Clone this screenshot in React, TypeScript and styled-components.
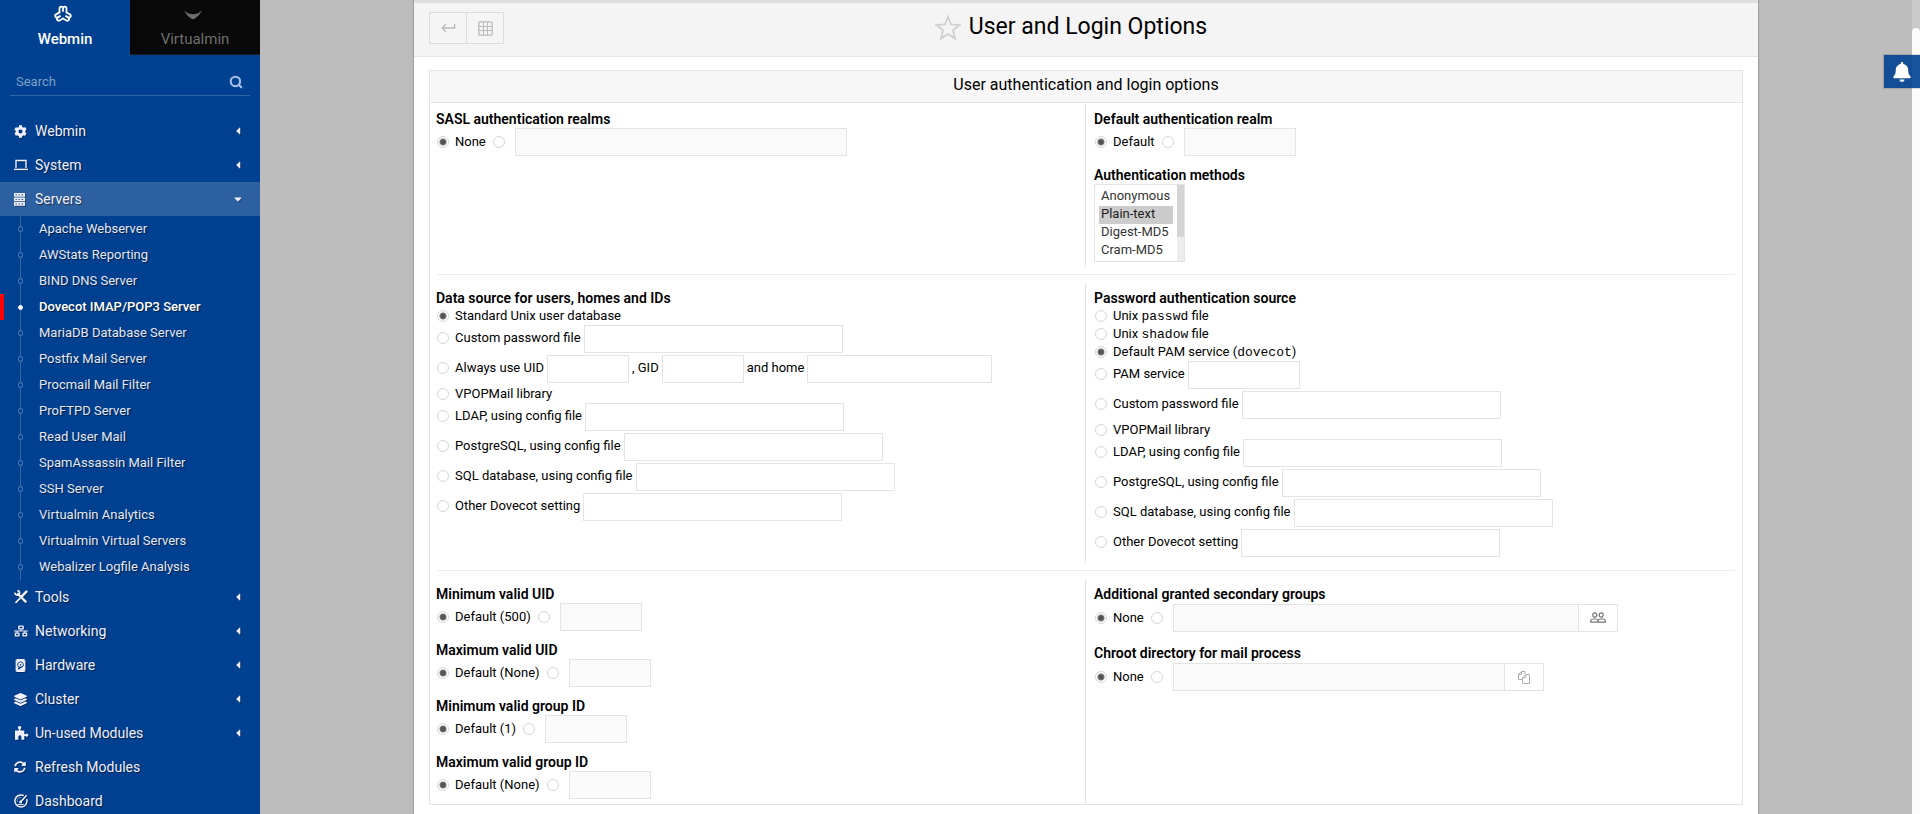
import React from "react";
import styled, { createGlobalStyle, css } from "styled-components";
import {
  FaBell,
  FaCaretDown,
  FaCaretLeft,
  FaCog,
  FaLayerGroup,
  FaNetworkWired,
  FaSyncAlt,
} from "react-icons/fa";
import { BsDeviceHddFill } from "react-icons/bs";
import { Search as SearchIcon } from "lucide-react";

const GlobalStyle = createGlobalStyle`
  *, *::before, *::after { box-sizing: border-box; }
  body {
    margin: 0;
    background: #bdbdbd;
    color: #000;
    font: 13px/18px Roboto, "Liberation Sans", sans-serif;
  }
  button, input, select { font: inherit; color: inherit; }
`;

/* ---------- icons ---------- */

const WebminIcon = () => (
  <svg width="20" height="18" viewBox="0 0 20 18" fill="none" stroke="currentColor" strokeWidth="1.8" strokeLinecap="round">
    {[0, 120, 240].map((turn) => (
      <path
        key={turn}
        transform={`rotate(${turn} 10 9.4)`}
        d="M6.500 7.400V3.400a1.750 1.750 0 0 1 3.500 0V6M10 3.400a1.750 1.750 0 0 1 3.500 0V7.400"
      />
    ))}
  </svg>
);

const VirtualminIcon = () => (
  <svg width="18" height="18" viewBox="0 0 18 18" fill="currentColor">
    <path d="M0 5.200C3 8.400 6 9.200 9 9.200s6-.8 9-4C16 9.600 12.600 12.400 10.400 13.800a2.600 2.600 0 0 1-2.800 0C5.400 12.400 2 9.600 0 5.200z" />
  </svg>
);

const LaptopIcon = () => (
  <svg width="14" height="12" viewBox="0 0 14 12" fill="none" stroke="currentColor">
    <path d="M2 9V1.5h10V9" strokeWidth="1.4" />
    <path d="M0 10.4h14" strokeWidth="1.4" />
  </svg>
);

const RackIcon = () => (
  <svg width="11" height="13" viewBox="0 0 11 13">
    {[0, 4.5, 9].map((y) => (
      <g key={y}>
        <rect x="0" y={y} width="11" height="3.8" rx="0.6" fill="currentColor" />
        <path d={`M1.5 ${y + 1.9}h1.4M4.4 ${y + 1.9}h1.4M7.4 ${y + 1.9}h1.8`} stroke="#1c4f90" strokeWidth="1" />
      </g>
    ))}
  </svg>
);

const ToolsIcon = () => (
  <svg width="14" height="14" viewBox="0 0 14 14" fill="none" stroke="currentColor">
    <path d="M4 4l7.6 7.6" strokeWidth="2.4" strokeLinecap="round" />
    <path d="M1 2.6a2.3 2.3 0 1 0 2.4-2" strokeWidth="1.7" />
    <path d="M2 12.4l4-4" strokeWidth="1.7" strokeLinecap="round" />
    <path d="M8 6.2l4.4-4.6" strokeWidth="2.6" strokeLinecap="round" />
  </svg>
);

const PuzzleIcon = () => (
  <svg width="15" height="14" viewBox="0 0 15 14" fill="currentColor">
    <path d="M1 4.6h3.8V3a1.6 1.6 0 1 1 1.6 0v1.6h3.9v3.7h1.2a1.5 1.5 0 1 1 0 1.7h-1.2v3.8H7.4v-3a1.5 1.5 0 0 0-3 0v3H1z" />
  </svg>
);

const GaugeIcon = () => (
  <svg width="14" height="14" viewBox="0 0 14 14" fill="none" stroke="currentColor">
    <path d="M9.8 1.7A6 6 0 1 0 12.6 5" strokeWidth="1.5" />
    <path d="M3.2 7.6a3.6 3.6 0 0 1 4.4-4" strokeWidth="1" strokeDasharray="1.2 1" />
    <path d="M6.8 7.8l5.4-6" strokeWidth="1.5" strokeLinecap="round" />
    <circle cx="6.6" cy="8" r="1.5" fill="currentColor" stroke="none" />
    <path d="M3.6 10.6h6" strokeWidth="1" />
  </svg>
);

const ReturnIcon = () => (
  <svg width="15" height="10" viewBox="0 0 15 10" fill="none" stroke="currentColor" strokeWidth="1.3">
    <path d="M13.6 1v4H1.4M5 1L1.2 5 5 9" />
  </svg>
);

const GridIcon = () => (
  <svg width="15" height="15" viewBox="0 0 15 15" fill="none" stroke="currentColor">
    <rect x="0.8" y="0.8" width="13.4" height="13.4" rx="1" strokeWidth="1.3" />
    <path d="M5.5 1v13M9.5 1v13M1 5.5h13M1 9.5h13" />
  </svg>
);

const StarIcon = () => (
  <svg width="26" height="25" viewBox="0 0 26 25" fill="none" stroke="currentColor" strokeWidth="1.8">
    <path d="M13 1.8l3.1 7.7 8.3.6-6.4 5.3 2 8.1-7-4.4-7 4.4 2-8.1-6.4-5.3 8.3-.6z" />
  </svg>
);

const GroupIcon = () => (
  <svg width="16" height="12" viewBox="0 0 16 12" fill="none" stroke="currentColor" strokeWidth="1.2">
    <ellipse cx="4.8" cy="3" rx="2" ry="2.2" />
    <ellipse cx="11.2" cy="3" rx="2" ry="2.2" />
    <path d="M.7 10.2V9c0-1.4 1.4-2 3-2h1.6c1.5 0 2.7.6 2.7 2 0-1.4 1.2-2 2.7-2h1.6c1.6 0 3 .6 3 2v1.2z" />
    <path d="M8 8.8v1.4" />
  </svg>
);

const FilesIcon = () => (
  <svg width="12" height="13" viewBox="0 0 12 13" fill="none" stroke="currentColor">
    <path d="M4.5 8.5h-4V3.5l3-3h3.5V3M3.5.5v3h-3M4.5 12.5h7V3.5H7.8L4.5 6.8zM7.8 3.5v3.3H4.5" />
  </svg>
);

/* ---------- shell ---------- */

const Shell = styled.div`
  display: grid;
  grid-template-columns: 260px minmax(0, 1fr) 8px;
  height: 100vh;
  overflow: hidden;
`;

const Sidebar = styled.aside`
  overflow: hidden;
  background: #004090;
  color: #f0f0ff;
`;

const Tabs = styled.div`
  display: grid;
  grid-template-columns: 1fr 1fr;
  height: 55px;
`;

const Tab = styled.button<{ $active?: boolean }>`
  display: flex;
  flex-direction: column;
  align-items: center;
  justify-content: space-between;
  border: 0;
  padding: 5px 0;
  font-size: 15px;
  line-height: 20px;
  background: #090909;
  color: #6e6e6e;
  border-bottom: 1px solid #1c1c1c;
  svg { margin-right: 4px; }
  ${(p) =>
    p.$active &&
    css`
      background: transparent;
      border-color: transparent;
      color: #fff;
      font-weight: 500;
    `}
`;

const SearchBar = styled.label`
  display: flex;
  align-items: center;
  margin: 13px 10px 18px;
  padding: 0 7px 0 6px;
  height: 28px;
  border-bottom: 1px solid #2f64a6;
  color: #a9bfe6;
`;

const SearchInput = styled.input`
  flex: 1;
  min-width: 0;
  padding: 0;
  border: 0;
  outline: 0;
  background: transparent;
  &::placeholder { color: #7d9fca; opacity: 1; }
`;

const List = styled.ul`
  margin: 0;
  padding: 0;
  list-style: none;
`;

const MenuLink = styled.a<{ $open?: boolean }>`
  display: grid;
  grid-template-columns: 21px 1fr 10px;
  align-items: center;
  height: 34px;
  padding: 0 18px 0 14px;
  color: inherit;
  text-decoration: none;
  font-size: 14px;
  text-shadow: 1px 1px 1px rgba(0, 0, 0, 0.5);
  background: ${(p) => (p.$open ? "#2d60a0" : "transparent")};
  svg { filter: drop-shadow(1px 1px 0 rgba(0, 0, 0, 0.3)); }
`;

const SubList = styled(List)`
  background: linear-gradient(#3363a3, #3363a3) 20px 0 / 1px 100% no-repeat;
`;

const SubLink = styled.a<{ $active?: boolean }>`
  display: flex;
  align-items: center;
  height: 26px;
  padding-left: 14px;
  border-left: 4px solid ${(p) => (p.$active ? "#f00" : "transparent")};
  color: ${(p) => (p.$active ? "#fff" : "#e4e8f6")};
  font-weight: ${(p) => (p.$active ? 500 : 400)};
  text-decoration: none;
  text-shadow: 1px 1px 1px rgba(0, 0, 0, 0.5);
  &::before {
    content: "";
    width: 5px;
    height: 6px;
    margin-right: 16px;
    border: 1px solid #5a83ba;
    border-radius: 3px;
    background: #004090;
    ${(p) =>
      p.$active &&
      css`
        height: 5px;
        background: #fff;
        border-color: #fff;
      `}
  }
`;

const ScrollTrack = styled.div`
  padding-top: 28px;
  background: #cacaca;
`;

const ScrollThumb = styled.div`
  height: 100%;
  border-radius: 4px 4px 0 0;
  background: #fcfcfc;
`;

const BellButton = styled.button`
  position: fixed;
  top: 55px;
  right: 0;
  display: grid;
  place-items: center;
  width: 36px;
  height: 33px;
  padding: 0;
  border: 0;
  background: rgba(0, 64, 144, 0.9);
  color: #fff;
  box-shadow: 0 0 1px 1px rgba(0, 0, 0, 0.12);
`;

/* ---------- page ---------- */

const Main = styled.main`
  display: flex;
  padding: 0 154px;
  @media (max-width: 1400px) { padding: 0 16px; }
`;

const Page = styled.div`
  flex: 1;
  min-width: 0;
  border-top: 3px solid #dedede;
  background: #fff;
  box-shadow: 0 0 1px 1px rgba(0, 0, 0, 0.15);
`;

const PageHeader = styled.header`
  display: grid;
  grid-template-columns: 1fr auto 1fr;
  align-items: start;
  height: 54px;
  padding: 9px 15px 0;
  background: #f4f4f4;
  border-bottom: 1px solid #e6e6e6;
`;

const ButtonGroup = styled.div`
  display: flex;
`;

const ToolButton = styled.button`
  display: grid;
  place-items: center;
  width: 38px;
  height: 32px;
  padding: 0;
  border: 1px solid #dcdcdc;
  background: #f5f5f5;
  color: #bbb;
  & + & { margin-left: -1px; }
`;

const Title = styled.h1`
  display: flex;
  align-items: center;
  gap: 8px;
  margin: 0;
  padding-right: 30px;
  font-size: 23px;
  line-height: 30px;
  font-weight: 400;
  svg { color: #cfcfcf; }
`;

const Panel = styled.form`
  margin: 13px 15px;
  border: 1px solid #e4e4e4;
`;

const PanelTitle = styled.h2`
  margin: 0 0 1px;
  padding: 2px 0 5px;
  border-bottom: 1px solid #e4e4e4;
  background: #f7f7f7;
  font-size: 16px;
  line-height: 24px;
  font-weight: 400;
  text-align: center;
`;

const Section = styled.section`
  display: grid;
  grid-template-columns: 1fr 1fr;
  & + &::before {
    content: "";
    grid-column: 1 / -1;
    height: 1px;
    margin: 7px 7px 8px;
    background: #ededed;
  }
`;

const Column = styled.div`
  min-width: 0;
  padding: 6px 6px 5px;
  & + & {
    padding-left: 8px;
  }
  &:nth-of-type(odd) {
    border-right: 1px solid #e4e4e4;
  }
`;

const Field = styled.fieldset`
  margin: 0;
  padding: 0;
  border: 0;
  min-width: 0;
  & + & { margin-top: 10px; }
`;

const Legend = styled.legend`
  display: block;
  padding: 0;
  font-size: 14px;
  font-weight: 600;
`;

const Line = styled.div<{ $group?: boolean }>`
  display: flex;
  align-items: center;
  margin: ${(p) => (p.$group ? "1px 0 2px" : "0")};
`;

const Choice = styled.div<{ $tall?: boolean }>`
  display: flex;
  align-items: flex-start;
  height: ${(p) => (p.$tall ? 30 : 18)}px;
  line-height: ${(p) => (p.$tall ? 26 : 18)}px;
  &:last-child { height: 29px; }
`;

const RadioLabel = styled.label`
  display: flex;
  align-items: center;
  white-space: pre;
`;

const Radio = styled.input.attrs({ type: "radio" })`
  appearance: none;
  flex: none;
  width: 12px;
  height: 12px;
  margin: 0 6px 0 1px;
  border: 1px solid #d6d6d6;
  border-radius: 50%;
  background: #fff;
  &:checked {
    background: radial-gradient(circle, #555 0 2px, #777 3px, #fff 4px);
  }
`;

const RadioAlone = styled(Radio)`
  margin: 0 10px 0 7px;
`;

const TextInput = styled.input<{ $w: number }>`
  width: ${(p) => p.$w}px;
  height: 28px;
  min-width: 0;
  padding: 0 6px;
  border: 1px solid #e4e4e4;
  border-radius: 0;
  background: #fff;
  outline: 0;
  &:disabled { background: #fafafa; }
`;

const InlineInput = styled(TextInput)`
  margin: 0 3px;
`;

const PickButton = styled.button<{ $faint?: boolean }>`
  display: grid;
  place-items: center;
  width: 40px;
  height: 28px;
  margin-left: -1px;
  padding: 0;
  border: 1px solid #e4e4e4;
  background: #fff;
  color: ${(p) => (p.$faint ? "#b0b0b0" : "#777")};
`;

const Mono = styled.code`
  font: 13px "Liberation Mono", monospace;
`;

const SelectBox = styled.div`
  position: relative;
  width: 91px;
  &::after {
    content: "";
    position: absolute;
    top: 1px;
    right: 1px;
    bottom: 1px;
    width: 7px;
    background: linear-gradient(#d4d4d4 52px, #ededed 52px);
    pointer-events: none;
  }
`;

const MethodSelect = styled.select`
  display: block;
  width: 100%;
  height: 78px;
  padding: 3px 11px 2px 4px;
  border: 1px solid #e4e4e4;
  border-radius: 0;
  background: #fff;
  color: #333;
  outline: 0;
  scrollbar-width: none;
  option {
    height: 18px;
    min-height: 18px;
    padding: 0 2px;
    line-height: 18px;
  }
  option:checked {
    background: #ccc linear-gradient(#ccc, #ccc);
    color: #222;
  }
`;

/* ---------- data ---------- */

type MenuItem = { label: string; icon: React.ReactNode; open?: boolean; leaf?: boolean };

const topItems: MenuItem[] = [
  { label: "Webmin", icon: <FaCog size={13} /> },
  { label: "System", icon: <LaptopIcon /> },
  { label: "Servers", icon: <RackIcon />, open: true },
];

const servers = [
  "Apache Webserver",
  "AWStats Reporting",
  "BIND DNS Server",
  "Dovecot IMAP/POP3 Server",
  "MariaDB Database Server",
  "Postfix Mail Server",
  "Procmail Mail Filter",
  "ProFTPD Server",
  "Read User Mail",
  "SpamAssassin Mail Filter",
  "SSH Server",
  "Virtualmin Analytics",
  "Virtualmin Virtual Servers",
  "Webalizer Logfile Analysis",
];

const bottomItems: MenuItem[] = [
  { label: "Tools", icon: <ToolsIcon /> },
  { label: "Networking", icon: <FaNetworkWired size={14} /> },
  { label: "Hardware", icon: <BsDeviceHddFill size={13} /> },
  { label: "Cluster", icon: <FaLayerGroup size={13} /> },
  { label: "Un-used Modules", icon: <PuzzleIcon /> },
  { label: "Refresh Modules", icon: <FaSyncAlt size={12} />, leaf: true },
  { label: "Dashboard", icon: <GaugeIcon />, leaf: true },
];

type Option = {
  name: string;
  text?: React.ReactNode;
  width?: number;
  checked?: boolean;
  extra?: React.ReactNode;
};

const userSources: Option[] = [
  { name: "Standard Unix user database", checked: true },
  { name: "Custom password file", width: 259 },
  {
    name: "Always use UID",
    width: 82,
    extra: (
      <>
        <label htmlFor="gid">, GID</label>
        <InlineInput id="gid" $w={82} />
        <label htmlFor="home">and home</label>
        <InlineInput id="home" $w={185} />
      </>
    ),
  },
  { name: "VPOPMail library" },
  { name: "LDAP, using config file", width: 259 },
  { name: "PostgreSQL, using config file", width: 259 },
  { name: "SQL database, using config file", width: 259 },
  { name: "Other Dovecot setting", width: 259 },
];

const passwordSources: Option[] = [
  { name: "passwd", text: <>Unix <Mono>passwd</Mono> file</> },
  { name: "shadow", text: <>Unix <Mono>shadow</Mono> file</> },
  { name: "pam", text: <>Default PAM service (<Mono>dovecot</Mono>)</>, checked: true },
  { name: "PAM service", width: 112 },
  { name: "Custom password file", width: 259 },
  { name: "VPOPMail library" },
  { name: "LDAP, using config file", width: 259 },
  { name: "PostgreSQL, using config file", width: 259 },
  { name: "SQL database, using config file", width: 259 },
  { name: "Other Dovecot setting", width: 259 },
];

/* ---------- parts ---------- */

const Menu = ({ items }: { items: MenuItem[] }) => (
  <List>
    {items.map((m) => (
      <li key={m.label}>
        <MenuLink href="#" $open={m.open}>
          {m.icon}
          <span>{m.label}</span>
          {!m.leaf && (m.open ? <FaCaretDown size={12} /> : <FaCaretLeft size={12} />)}
        </MenuLink>
      </li>
    ))}
  </List>
);

const ChoiceField = ({ legend, name, options }: { legend: string; name: string; options: Option[] }) => (
  <Field>
    <Legend>{legend}</Legend>
    {options.map((o) => (
      <Choice key={o.name} $tall={!!o.width}>
        <RadioLabel>
          <Radio name={name} defaultChecked={o.checked} />
          <span>{o.text ?? o.name}</span>
        </RadioLabel>
        {o.width && <InlineInput $w={o.width} aria-label={o.name} />}
        {o.extra}
      </Choice>
    ))}
  </Field>
);

type DefaultFieldProps = {
  legend: string;
  name: string;
  text: string;
  width: number;
  picker?: React.ReactNode;
};

const DefaultField = ({ legend, name, text, width, picker }: DefaultFieldProps) => (
  <Field>
    <Legend>{legend}</Legend>
    <Line $group={!!picker}>
      <RadioLabel>
        <Radio name={name} defaultChecked />
        <span>{text}</span>
      </RadioLabel>
      <RadioAlone name={name} aria-label={`${legend}: custom`} />
      <TextInput $w={width} disabled aria-label={legend} />
      {picker}
    </Line>
  </Field>
);

export default function App() {
  return (
    <>
      <GlobalStyle />
      <Shell>
        <Sidebar>
          <Tabs>
            <Tab type="button" $active>
              <WebminIcon />
              Webmin
            </Tab>
            <Tab type="button">
              <VirtualminIcon />
              Virtualmin
            </Tab>
          </Tabs>
          <SearchBar>
            <SearchInput type="text" placeholder="Search" aria-label="Search" />
            <SearchIcon size={14} strokeWidth={3.6} />
          </SearchBar>
          <nav>
            <Menu items={topItems} />
            <SubList>
              {servers.map((s) => (
                <li key={s}>
                  <SubLink href="#" $active={s.startsWith("Dovecot")}>
                    {s}
                  </SubLink>
                </li>
              ))}
            </SubList>
            <Menu items={bottomItems} />
          </nav>
        </Sidebar>

        <Main>
          <Page>
            <PageHeader>
              <ButtonGroup>
                <ToolButton type="button" aria-label="Return">
                  <ReturnIcon />
                </ToolButton>
                <ToolButton type="button" aria-label="Module index">
                  <GridIcon />
                </ToolButton>
              </ButtonGroup>
              <Title>
                <StarIcon />
                User and Login Options
              </Title>
            </PageHeader>

            <Panel>
              <PanelTitle>User authentication and login options</PanelTitle>

              <Section>
                <Column>
                  <DefaultField legend="SASL authentication realms" name="realms" text="None" width={332} />
                </Column>
                <Column>
                  <DefaultField legend="Default authentication realm" name="realm" text="Default" width={112} />
                  <Field>
                    <Legend as="label" htmlFor="methods">
                      Authentication methods
                    </Legend>
                    <SelectBox>
                      <MethodSelect id="methods" multiple size={4} defaultValue={["Plain-text"]}>
                        <option>Anonymous</option>
                        <option>Plain-text</option>
                        <option>Digest-MD5</option>
                        <option>Cram-MD5</option>
                        <option>APOP</option>
                        <option>NTLM</option>
                      </MethodSelect>
                    </SelectBox>
                  </Field>
                </Column>
              </Section>

              <Section>
                <Column>
                  <ChoiceField legend="Data source for users, homes and IDs" name="userdb" options={userSources} />
                </Column>
                <Column>
                  <ChoiceField legend="Password authentication source" name="passdb" options={passwordSources} />
                </Column>
              </Section>

              <Section>
                <Column>
                  <DefaultField legend="Minimum valid UID" name="minuid" text="Default (500)" width={82} />
                  <DefaultField legend="Maximum valid UID" name="maxuid" text="Default (None)" width={82} />
                  <DefaultField legend="Minimum valid group ID" name="mingid" text="Default (1)" width={82} />
                  <DefaultField legend="Maximum valid group ID" name="maxgid" text="Default (None)" width={82} />
                </Column>
                <Column>
                  <DefaultField
                    legend="Additional granted secondary groups"
                    name="groups"
                    text="None"
                    width={406}
                    picker={
                      <PickButton type="button" aria-label="Choose groups">
                        <GroupIcon />
                      </PickButton>
                    }
                  />
                  <DefaultField
                    legend="Chroot directory for mail process"
                    name="chroot"
                    text="None"
                    width={332}
                    picker={
                      <PickButton type="button" $faint aria-label="Choose directory">
                        <FilesIcon />
                      </PickButton>
                    }
                  />
                </Column>
              </Section>
            </Panel>
          </Page>
        </Main>

        <ScrollTrack>
          <ScrollThumb />
        </ScrollTrack>
        <BellButton type="button" aria-label="Notifications">
          <FaBell size={20} />
        </BellButton>
      </Shell>
    </>
  );
}
